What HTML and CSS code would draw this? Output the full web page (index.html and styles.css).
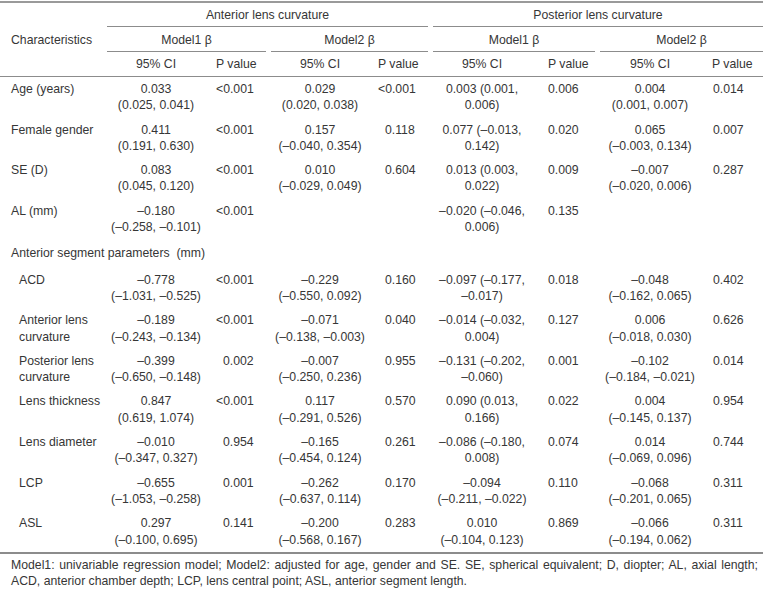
FILE: index.html
```html
<!DOCTYPE html>
<html>
<head>
<meta charset="utf-8">
<link rel="stylesheet" href="styles.css">
</head>
<body>
<table class="tbl">
  <colgroup>
    <col class="c1"><col class="c2"><col class="c3"><col class="c4"><col class="c5"><col class="c6"><col class="c7"><col class="c8"><col class="c9">
  </colgroup>
  <thead>
    <tr class="h1">
      <th rowspan="3" class="chr">Characteristics</th>
      <th colspan="4"><div class="ul ga">Anterior lens curvature</div></th>
      <th colspan="4"><div class="ul gp">Posterior lens curvature</div></th>
    </tr>
    <tr class="h2">
      <th colspan="2"><div class="ul m1">Model1 β</div></th>
      <th colspan="2"><div class="ul m2">Model2 β</div></th>
      <th colspan="2"><div class="ul m3">Model1 β</div></th>
      <th colspan="2"><div class="ul m4">Model2 β</div></th>
    </tr>
    <tr class="h3">
      <th>95% CI</th><th>P value</th><th>95% CI</th><th>P value</th><th>95% CI</th><th>P value</th><th>95% CI</th><th>P value</th>
    </tr>
  </thead>
  <tbody>
    <tr class="d">
      <td>Age (years)</td>
      <td>0.033<br>(0.025, 0.041)</td><td><span class="lt">&lt;</span>0.001</td>
      <td>0.029<br>(0.020, 0.038)</td><td><span class="lt">&lt;</span>0.001</td>
      <td>0.003 (0.001,<br>0.006)</td><td>0.006</td>
      <td>0.004<br>(0.001, 0.007)</td><td>0.014</td>
    </tr>
    <tr class="d">
      <td>Female gender</td>
      <td>0.411<br>(0.191, 0.630)</td><td><span class="lt">&lt;</span>0.001</td>
      <td>0.157<br>(–0.040, 0.354)</td><td>0.118</td>
      <td>0.077 (–0.013,<br>0.142)</td><td>0.020</td>
      <td>0.065<br>(–0.003, 0.134)</td><td>0.007</td>
    </tr>
    <tr class="d">
      <td>SE (D)</td>
      <td>0.083<br>(0.045, 0.120)</td><td><span class="lt">&lt;</span>0.001</td>
      <td>0.010<br>(–0.029, 0.049)</td><td>0.604</td>
      <td>0.013 (0.003,<br>0.022)</td><td>0.009</td>
      <td>–0.007<br>(–0.020, 0.006)</td><td>0.287</td>
    </tr>
    <tr class="d">
      <td>AL (mm)</td>
      <td>–0.180<br>(–0.258, –0.101)</td><td><span class="lt">&lt;</span>0.001</td>
      <td></td><td></td>
      <td>–0.020 (–0.046,<br>0.006)</td><td>0.135</td>
      <td></td><td></td>
    </tr>
    <tr class="sec">
      <td colspan="9">Anterior segment parameters&nbsp; (mm)</td>
    </tr>
    <tr class="d">
      <td class="sub">ACD</td>
      <td>–0.778<br>(–1.031, –0.525)</td><td><span class="lt">&lt;</span>0.001</td>
      <td>–0.229<br>(–0.550, 0.092)</td><td>0.160</td>
      <td>–0.097 (–0.177,<br>–0.017)</td><td>0.018</td>
      <td>–0.048<br>(–0.162, 0.065)</td><td>0.402</td>
    </tr>
    <tr class="d">
      <td class="sub">Anterior lens<br>curvature</td>
      <td>–0.189<br>(–0.243, –0.134)</td><td><span class="lt">&lt;</span>0.001</td>
      <td>–0.071<br>(–0.138, –0.003)</td><td>0.040</td>
      <td>–0.014 (–0.032,<br>0.004)</td><td>0.127</td>
      <td>0.006<br>(–0.018, 0.030)</td><td>0.626</td>
    </tr>
    <tr class="d">
      <td class="sub">Posterior lens<br>curvature</td>
      <td>–0.399<br>(–0.650, –0.148)</td><td>0.002</td>
      <td>–0.007<br>(–0.250, 0.236)</td><td>0.955</td>
      <td>–0.131 (–0.202,<br>–0.060)</td><td>0.001</td>
      <td>–0.102<br>(–0.184, –0.021)</td><td>0.014</td>
    </tr>
    <tr class="d">
      <td class="sub">Lens thickness</td>
      <td>0.847<br>(0.619, 1.074)</td><td><span class="lt">&lt;</span>0.001</td>
      <td>0.117<br>(–0.291, 0.526)</td><td>0.570</td>
      <td>0.090 (0.013,<br>0.166)</td><td>0.022</td>
      <td>0.004<br>(–0.145, 0.137)</td><td>0.954</td>
    </tr>
    <tr class="d">
      <td class="sub">Lens diameter</td>
      <td>–0.010<br>(–0.347, 0.327)</td><td>0.954</td>
      <td>–0.165<br>(–0.454, 0.124)</td><td>0.261</td>
      <td>–0.086 (–0.180,<br>0.008)</td><td>0.074</td>
      <td>0.014<br>(–0.069, 0.096)</td><td>0.744</td>
    </tr>
    <tr class="d">
      <td class="sub">LCP</td>
      <td>–0.655<br>(–1.053, –0.258)</td><td>0.001</td>
      <td>–0.262<br>(–0.637, 0.114)</td><td>0.170</td>
      <td>–0.094<br>(–0.211, –0.022)</td><td>0.110</td>
      <td>–0.068<br>(–0.201, 0.065)</td><td>0.311</td>
    </tr>
    <tr class="d last">
      <td class="sub">ASL</td>
      <td>0.297<br>(–0.100, 0.695)</td><td>0.141</td>
      <td>–0.200<br>(–0.568, 0.167)</td><td>0.283</td>
      <td>0.010<br>(–0.104, 0.123)</td><td>0.869</td>
      <td>–0.066<br>(–0.194, 0.062)</td><td>0.311</td>
    </tr>
  </tbody>
</table>
<div class="foot">
  <div class="fl1">Model1: univariable regression model; Model2: adjusted for age, gender and SE. SE, spherical equivalent; D, diopter; AL, axial length;</div>
  <div>ACD, anterior chamber depth; LCP, lens central point; ASL, anterior segment length.</div>
</div>
</body>
</html>
```

FILE: styles.css
```css
html, body {
  margin: 0;
  padding: 0;
  background: #ffffff;
}
body {
  font-family: "Liberation Sans", Arial, sans-serif;
  font-size: 12.25px;
  color: #363636;
}
.tbl {
  width: 763px;
  table-layout: fixed;
  border-collapse: separate;
  border-spacing: 0;
  margin-top: 1px;
  border-top: 2px solid #9a9a9a;
}
.c1 { width: 107px; }
.c2 { width: 98px; }
.c3 { width: 63px; }
.c4 { width: 104px; }
.c5 { width: 58px; }
.c6 { width: 104px; }
.c7 { width: 64px; }
.c8 { width: 104px; }
.c9 { width: 61px; }

th {
  font-weight: normal;
  padding: 0;
  text-align: center;
  vertical-align: middle;
  line-height: 16px;
}
th.chr {
  text-align: left;
  padding-left: 11px;
  border-bottom: 1px solid #8c8c8c;
}
.ul {
  border-bottom: 1px solid #8c8c8c;
}
.h1 .ul { padding: 4px 0 3px; }
.h2 .ul { padding: 5px 0 3px; }
.ga { margin-right: 2px; }
.gp { margin-left: 3px; }
.m1 { margin-right: 2px; }
.m2 { margin: 0 2px 0 3px; }
.m3 { margin: 0 3px 0 3px; }
.m4 { margin-left: 2px; }

.h3 th {
  padding: 4px 0 4px;
  border-bottom: 1px solid #8c8c8c;
}
.h3 th:nth-child(even) { text-align: left; }
.h3 th:nth-child(2) { padding-left: 11px; }
.h3 th:nth-child(4) { padding-left: 6px; }
.h3 th:nth-child(6) { padding-left: 14px; }
.h3 th:nth-child(8) { padding-left: 10px; }

td {
  padding: 4px 0;
  line-height: 16.3px;
  vertical-align: top;
  white-space: nowrap;
}
.d td { text-align: center; }
.d td:nth-child(1) { text-align: left; padding-left: 11px; }
.d td.sub { padding-left: 19px; }
.d td:nth-child(3) { text-align: left; padding-left: 18px; }
.d td:nth-child(5) { text-align: left; padding-left: 13px; }
.d td:nth-child(7) { text-align: left; padding-left: 14px; }
.d td:nth-child(9) { text-align: left; padding-left: 11px; }
.lt {
  display: inline-block;
  margin-left: -7px;
}
.sec td {
  padding: 6px 0 6px 11px;
  text-align: left;
}
.last td {
  border-bottom: 2px solid #8c8c8c;
}

.foot {
  margin-top: 3px;
  padding: 0 5px 0 11px;
  width: 747px;
  line-height: 16px;
}
.fl1 {
  text-align: justify;
  text-align-last: justify;
}
```
